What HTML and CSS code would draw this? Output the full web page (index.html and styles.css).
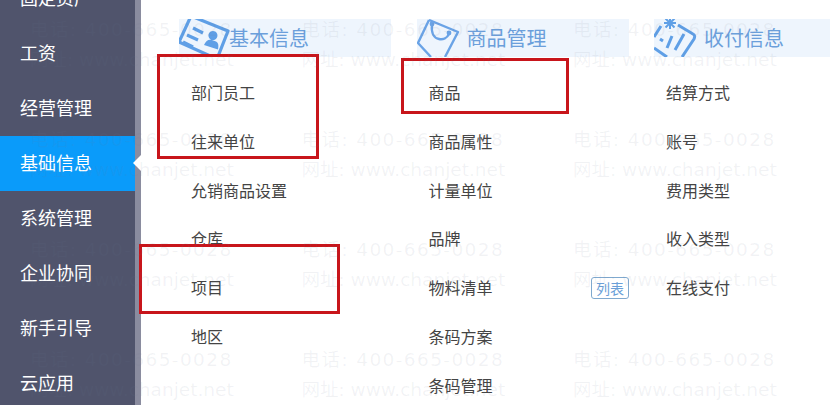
FILE: index.html
```html
<!DOCTYPE html>
<html lang="zh-CN">
<head>
<meta charset="utf-8">
<title>基础信息</title>
<link rel="stylesheet" href="styles.css">
</head>
<body>
<div class="app">
  <nav class="side">
    <a class="nav">固定资产</a>
    <a class="nav">工资</a>
    <a class="nav">经营管理</a>
    <a class="nav on">基础信息</a>
    <a class="nav">系统管理</a>
    <a class="nav">企业协同</a>
    <a class="nav">新手引导</a>
    <a class="nav">云应用</a>
  </nav>
  <div class="strip"></div>
  <main class="cols">
    <section class="col">
      <header class="head">
        <svg class="ico" viewBox="0 0 52 38"><g fill="none" stroke="#5f9fe6" stroke-width="3.2" stroke-linejoin="round"><path d="M12-3 49 12 38 40 0 23z"/><path d="M14 9l10 5M8 16l11 5M4 23l10 5"/></g><path d="M34 12a4.500 4.500 0 1 1-.1 0zM25 26c2-5 5-6 8-5l4 1.500c2 1 3 3 2 8z" fill="#5f9fe6"/></svg>
        <h2 class="title">基本信息</h2>
      </header>
      <a class="item">部门员工</a><a class="item">往来单位</a><a class="item">允销商品设置</a><a class="item">仓库</a><a class="item">项目</a><a class="item">地区</a>
    </section>
    <section class="col">
      <header class="head">
        <svg class="ico" viewBox="0 0 52 38"><g fill="none" stroke="#6aa3e6" stroke-width="2.400" stroke-linejoin="round"><path d="M12 1 41 13 28 38M14 38 1 24 12 1"/><path d="M15 6c-1 8 2 13 7 14 4 1 8-1 10-5"/></g><circle cx="15" cy="5" r="2.400" fill="#6aa3e6"/><circle cx="32" cy="14" r="2.400" fill="#6aa3e6"/></svg>
        <h2 class="title">商品管理</h2>
      </header>
      <a class="item">商品</a><a class="item">商品属性</a><a class="item">计量单位</a><a class="item">品牌</a><a class="item">物料清单</a><a class="item">条码方案</a><a class="item">条码管理</a>
    </section>
    <section class="col">
      <header class="head">
        <svg class="ico" viewBox="0 0 52 38"><g fill="none" stroke="#5f9fe6" stroke-width="3" stroke-linejoin="round"><path d="M24 6 39 15c2 1 2 3 1 5L28 38M13 38 0 29M0 18 7 7"/><path d="M6 20l3 2M13 29l5-12M21 31l9-16"/><path d="M16-2v12M10 4h12M11.500-.5l9 9M20.500-.5l-9 9" stroke-width="2"/></g></svg>
        <h2 class="title">收付信息</h2>
      </header>
      <a class="item">结算方式</a><a class="item">账号</a><a class="item">费用类型</a><a class="item">收入类型</a><a class="item"><span class="tag">列表</span>在线支付</a>
    </section>
  </main>
</div>
<div class="mark-box box-a"></div>
<div class="mark-box box-b"></div>
<div class="mark-box box-c"></div>
<div class="marks">
  <p class="mk">电话: 400-665-0028<br><span class="web">网址: www.chanjet.net</span></p><p class="mk">电话: 400-665-0028<br><span class="web">网址: www.chanjet.net</span></p><p class="mk">电话: 400-665-0028<br><span class="web">网址: www.chanjet.net</span></p>
  <p class="mk">电话: 400-665-0028<br><span class="web">网址: www.chanjet.net</span></p><p class="mk">电话: 400-665-0028<br><span class="web">网址: www.chanjet.net</span></p><p class="mk">电话: 400-665-0028<br><span class="web">网址: www.chanjet.net</span></p>
  <p class="mk">电话: 400-665-0028<br><span class="web">网址: www.chanjet.net</span></p><p class="mk">电话: 400-665-0028<br><span class="web">网址: www.chanjet.net</span></p><p class="mk">电话: 400-665-0028<br><span class="web">网址: www.chanjet.net</span></p>
  <p class="mk">电话: 400-665-0028<br><span class="web">网址: www.chanjet.net</span></p><p class="mk">电话: 400-665-0028<br><span class="web">网址: www.chanjet.net</span></p><p class="mk">电话: 400-665-0028<br><span class="web">网址: www.chanjet.net</span></p>
</div>
</body>
</html>
```
FILE: styles.css
```css
html, body { margin: 0; height: 100%; overflow: hidden; background: #fff; }
body { position: relative; font-family: "Noto Sans CJK SC", "Noto Sans", sans-serif; }
.app { display: flex; width: 830px; height: 405px; overflow: hidden; }
.side { width: 135px; flex: none; margin-top: -29px; background: #50546c; height: 440px; position: relative; z-index: 1; }
.strip { width: 6px; flex: none; background: #8a8c9f; }
.nav { display: block; height: 55px; line-height: 53px; padding-left: 20px; font-size: 18px; color: #fff; position: relative; }
.nav.on { background: #0a9bfa; }
.nav.on::after { content: ""; position: absolute; right: -6px; top: 19px; border: 8px solid transparent; border-left: 0; border-right-color: #fff; }
.cols { flex: 1; display: flex; padding: 19px 0 0 38px; }
.col { width: 237.500px; flex: none; }
.head { width: 212px; height: 38px; background: #eef5fd; display: flex; overflow: hidden; margin-bottom: 11px; }
.col:nth-child(3) .head { width: 176px; }
.ico { width: 52px; height: 38px; flex: none; }
.title { margin: 0 0 0 -2px; font-size: 20px; font-weight: 400; line-height: 38px; color: #6b9fdb; }
.item { display: block; height: 48.800px; line-height: 48.800px; padding-left: 12px; font-size: 16px; color: #444; position: relative; }
.tag { position: absolute; left: -63px; top: 14px; width: 36px; height: 20px; border: 1px solid #7fa9cf; border-radius: 3px; font-size: 14px; line-height: 20px; text-align: center; color: #6a9fd8; }
.mark-box { position: absolute; border: 3px solid #c8151b; box-sizing: border-box; }
.box-a { left: 157px; top: 54px; width: 162px; height: 105px; }
.box-b { left: 401px; top: 58px; width: 168px; height: 56px; }
.box-c { left: 139px; top: 244px; width: 201px; height: 70px; }
.marks { position: absolute; z-index: 2; left: 30px; top: 15px; width: 800px; height: 390px; overflow: hidden; display: grid; grid-template-columns: repeat(3, 271.500px); grid-auto-rows: 110px; pointer-events: none; }
.mk { margin: 0; font-family: "DejaVu Sans", "Noto Sans CJK SC", sans-serif; font-size: 18.500px; line-height: 30px; letter-spacing: 1.400px; white-space: nowrap; color: rgba(110, 120, 145, 0.09); }
.web { letter-spacing: 0; }
```
